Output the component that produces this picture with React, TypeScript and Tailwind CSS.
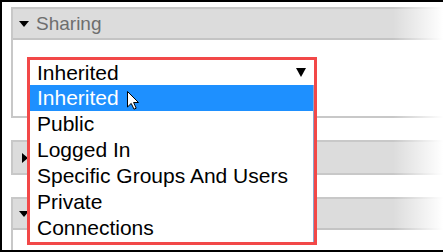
import React from "react";

const font = { fontFamily: '"Liberation Sans", Arial, sans-serif' };

function Caret({ open }: { open: boolean }) {
  return open ? (
    <svg width="10" height="6" viewBox="0 0 10 6" className="shrink-0">
      <path d="M0 0 H10 L5 6 Z" fill="#000" />
    </svg>
  ) : (
    <svg width="6" height="10" viewBox="0 0 6 10" className="shrink-0">
      <path d="M0 0 V10 L6 5 Z" fill="#000" />
    </svg>
  );
}

function PanelHeader({ title, open }: { title?: string; open: boolean }) {
  return (
    <div
      className={`h-[31px] bg-[#dcdcdc] flex items-center ${open ? "pl-[6px]" : "pl-[9px]"} ${
        open ? "border-b-2 border-[#c4c4c4]" : ""
      }`}
    >
      <Caret open={open} />
      {title && (
        <span className="ml-[7px] text-[19px] leading-[31px] text-[#6e6e6e]">{title}</span>
      )}
    </div>
  );
}

function Cursor() {
  return (
    <svg width="12" height="19" viewBox="0 0 12 19" className="absolute left-[97px] top-[6px]">
      <path
        d="M0.5 0.5 V16 L4.2 12.4 L7 18.2 L9.2 17.2 L6.6 11.5 H11.5 Z"
        fill="#fff"
        stroke="#000"
        strokeWidth="1"
        strokeLinejoin="miter"
      />
    </svg>
  );
}

const options = ["Inherited", "Public", "Logged In", "Specific Groups And Users", "Private", "Connections"];

export default function App() {
  return (
    <div
      className="relative w-[443px] h-[252px] overflow-hidden bg-white border-t-2 border-l-2 border-b-2 border-black"
      style={font}
    >
      <div className="pl-[9px] pt-[5px] w-[480px] flex flex-col gap-[22px]">
        <div className="border-2 border-[#c8c8c8]">
          <PanelHeader title="Sharing" open />
          <div className="h-[76px] bg-white" />
        </div>
        <div className="border-2 border-[#c8c8c8]">
          <PanelHeader open={false} />
        </div>
        <div className="border-2 border-b-0 border-[#c8c8c8]">
          <PanelHeader open />
          <div className="h-[40px] bg-white" />
        </div>
      </div>

      {/* open select with annotation frame */}
      <div className="absolute left-[25px] top-[55px] w-[290px] h-[188px] border-[3px] border-[#f24848] bg-white flex flex-col">
        <div className="h-[25px] flex items-center justify-between pl-[7px] pr-[8px] text-[21px] leading-[25px] text-black">
          <span>Inherited</span>
          <svg width="10" height="9" viewBox="0 0 10 9">
            <path d="M0 0 H10 L5 9 Z" fill="#000" />
          </svg>
        </div>
        <div className="flex-1 border-r border-[#8aa6cc] flex flex-col">
          {options.map((o, i) => (
            <div
              key={o}
              className={`relative h-[26px] pl-[7px] text-[21px] leading-[26px] whitespace-nowrap ${
                i === 0 ? "bg-[#1e90ff] text-white" : "text-black"
              }`}
            >
              {o}
              {i === 0 && <Cursor />}
            </div>
          ))}
        </div>
      </div>

      <div className="absolute right-0 top-0 h-full w-[50px] bg-linear-to-r from-transparent to-white" />
    </div>
  );
}
